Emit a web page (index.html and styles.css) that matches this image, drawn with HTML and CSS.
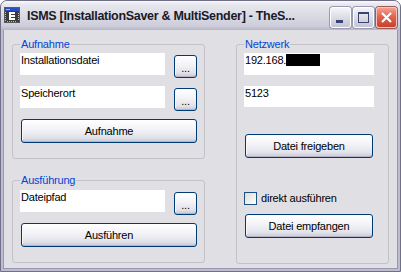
FILE: index.html
```html
<!DOCTYPE html>
<html lang="de">
<head>
    <meta charset="UTF-8">
    <title>ISMS [InstallationSaver &amp; MultiSender]</title>
    <link rel="stylesheet" href="styles.css">
</head>
<body>
    <div class="window">
        <div class="titlebar">
            <svg class="app-icon" width="16" height="16" viewBox="0 0 16 16">
                <rect x="0" y="0" width="16" height="16" fill="#5a5a5a"/>
                <rect x="1" y="1" width="14" height="3" fill="#2a4cc8"/>
                <rect x="2" y="2" width="4" height="1" fill="#9fb4ff"/>
                <rect x="1" y="4" width="14" height="11" fill="#3c3c3c"/>
                <path d="M1 5h1v1H1zM1 7h1v1H1zM1 9h1v1H1zM1 11h1v1H1zM1 13h1v1H1zM14 6h1v1h-1zM14 8h1v1h-1zM14 10h1v1h-1zM14 12h1v1h-1zM3 14h1v1H3zM5 14h1v1H5zM7 14h1v1H7zM9 14h1v1H9zM11 14h1v1h-1z" fill="#bdbdbd"/>
                <path d="M5 5h6v2H7v1h4v2H7v1h4v2H5z" fill="#ffffff"/>
            </svg>
            <span class="title">ISMS [InstallationSaver &amp; MultiSender] - TheS...</span>
            <div class="caption-buttons">
                <div class="cap cap-min">
                    <svg width="21" height="21" viewBox="0 0 21 21"><rect x="6" y="13" width="7" height="3" fill="#3a4470"/></svg>
                </div>
                <div class="cap cap-max">
                    <svg width="21" height="21" viewBox="0 0 21 21"><path d="M5 5h11v11H5zM6 7v8h9V7z" fill="#3a4470" fill-rule="evenodd"/></svg>
                </div>
                <div class="cap cap-close">
                    <svg width="21" height="21" viewBox="0 0 21 21"><path d="M6 6l9 9M15 6l-9 9" stroke="#ffffff" stroke-width="2.2"/></svg>
                </div>
            </div>
        </div>
        <div class="frame">
            <div class="client">
                <div class="col-left">
                    <fieldset class="group group-aufnahme">
                        <legend>Aufnahme</legend>
                        <div class="row">
                            <div class="edit edit-left">Installationsdatei</div>
                            <div class="btn btn-browse">...</div>
                        </div>
                        <div class="row">
                            <div class="edit edit-left">Speicherort</div>
                            <div class="btn btn-browse">...</div>
                        </div>
                        <div class="btn btn-wide">Aufnahme</div>
                    </fieldset>
                    <fieldset class="group group-ausfuehrung">
                        <legend>Ausführung</legend>
                        <div class="row">
                            <div class="edit edit-left">Dateipfad</div>
                            <div class="btn btn-browse">...</div>
                        </div>
                        <div class="btn btn-wide">Ausführen</div>
                    </fieldset>
                </div>
                <fieldset class="group group-netzwerk">
                    <legend>Netzwerk</legend>
                    <div class="edit edit-right">192.168.<span class="redacted"></span></div>
                    <div class="edit edit-right edit-port">5123</div>
                    <div class="btn btn-net btn-share">Datei freigeben</div>
                    <label class="check-row">
                        <span class="checkbox"></span>
                        direkt ausführen
                    </label>
                    <div class="btn btn-net">Datei empfangen</div>
                </fieldset>
            </div>
        </div>
    </div>
</body>
</html>
```

FILE: styles.css
```css
html {
    background-color: #ffffff;
}

body {
    margin: 0;
    font-family: "Liberation Sans", Arial, sans-serif;
    font-size: 11px;
    letter-spacing: -0.2px;
    color: #000;
}

.window {
    width: 399px;
    height: 270px;
    border: 1px solid #6f6f88;
    border-radius: 7px 7px 0 0;
    display: flex;
    flex-direction: column;
    overflow: hidden;
    background-color: #bdbdcf;
}

/* Titelleiste */
.titlebar {
    height: 29px;
    flex: none;
    display: flex;
    align-items: flex-start;
    padding: 0 3px 0 3px;
    background: linear-gradient(#fbfbfd 0, #e8e8ef 3px, #dcdce5 45%, #cecedb 85%, #b6b6c8 100%);
}

.app-icon {
    margin-top: 6px;
    flex: none;
}

.title {
    margin-left: 7px;
    margin-top: 7px;
    font-family: "Liberation Sans", Arial, sans-serif;
    font-weight: bold;
    font-size: 12.5px;
    letter-spacing: -0.3px;
    line-height: 16px;
    color: #1a1a28;
    white-space: nowrap;
    flex: 1;
}

.caption-buttons {
    display: flex;
    gap: 2px;
    margin-top: 6px;
}

.cap {
    width: 19px;
    height: 19px;
    border: 1px solid #ffffff;
    border-radius: 3px;
    box-shadow: 0 0 0 1px #9a9ab2;
    background: linear-gradient(#f4f4f8, #dcdce6 50%, #c4c4d4);
}

.cap svg {
    display: block;
    margin: -1px;
}

.cap-close {
    background: linear-gradient(#f0a08e, #e2644f 45%, #c8412c);
    border-color: #f6c4b8;
    box-shadow: 0 0 0 1px #a05a58;
}

/* Rahmen und Client-Bereich */
.frame {
    flex: 1;
    display: flex;
    padding: 0 2px 2px;
}

.client {
    flex: 1;
    display: flex;
    gap: 31px;
    padding: 8px 8px 4px;
    background-color: #e0dfe3;
    border: 1px solid #9797ad;
    border-top: none;
}

.col-left {
    width: 193px;
    display: flex;
    flex-direction: column;
    gap: 15px;
}

.group {
    margin: 0;
    border: 1px solid #c2c2c8;
    border-radius: 3px;
    padding: 2px 7px 15px;
}

.group legend {
    padding: 0 1px;
    line-height: 13px;
    color: #0046d5;
}

.group-ausfuehrung {
    padding-top: 3px;
}

.group-netzwerk {
    width: 153px;
    box-sizing: border-box;
    padding: 2px 14px 0 7px;
}

.row {
    display: flex;
    justify-content: space-between;
    align-items: flex-start;
    height: 25px;
    margin-bottom: 8px;
}

.edit {
    height: 22px;
    box-sizing: border-box;
    padding: 1px 0 0 1px;
    line-height: 13px;
    background-color: #ffffff;
    white-space: nowrap;
}

.edit-left {
    width: 145px;
}

.edit-right {
    width: 130px;
}

.edit-port {
    margin-top: 11px;
    height: 21px;
}

.redacted {
    display: inline-block;
    width: 34px;
    height: 12px;
    background-color: #000;
    vertical-align: -2px;
}

/* Schaltflächen */
.btn {
    box-sizing: border-box;
    border: 1px solid #003c74;
    border-radius: 3px;
    background: linear-gradient(#ffffff 0, #f4f4f8 40%, #e2e2ea 80%, #c8c7d8 100%);
    box-shadow: inset 0 -1px 0 #b4b3c8, inset 1px 0 0 #f8f8fb;
    text-align: center;
    line-height: 21px;
}

.btn-browse {
    width: 23px;
    height: 23px;
    margin-top: 2px;
    line-height: 24px;
}

.btn-wide {
    width: 176px;
    height: 24px;
    margin-left: 1px;
    line-height: 22px;
}

.btn-net {
    width: 128px;
    height: 24px;
    margin-left: 1px;
    line-height: 22px;
}

.btn-share {
    margin-top: 27px;
}

.check-row {
    display: flex;
    align-items: center;
    gap: 4px;
    margin-top: 33px;
    margin-bottom: 9px;
    height: 14px;
    line-height: 13px;
}

.checkbox {
    width: 13px;
    height: 13px;
    box-sizing: border-box;
    border: 1px solid #1c5180;
    background: linear-gradient(135deg, #dcdcd7, #ffffff);
}
```
